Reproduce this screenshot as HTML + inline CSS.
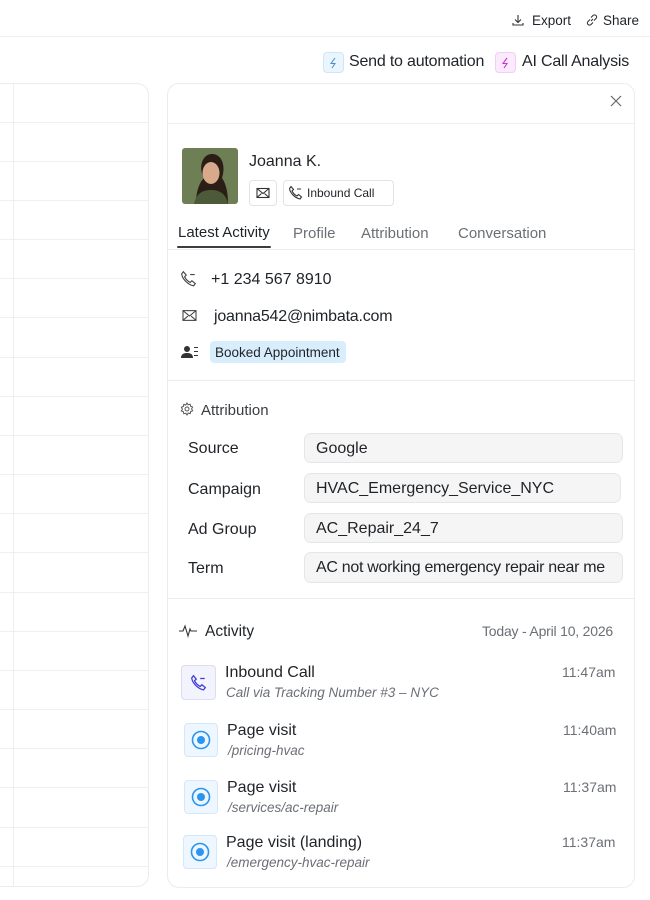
<!DOCTYPE html>
<html><head><meta charset="utf-8"><style>
*{margin:0;padding:0;box-sizing:border-box}
body{width:650px;height:900px;background:#fff;font-family:"Liberation Sans",Arial,sans-serif;color:#1f2328;position:relative;overflow:hidden}
.a{position:absolute;white-space:nowrap}
.d{transform:translateY(2px)}
.hl{position:absolute;left:0;width:149px;height:1px;background:#efefef}
.box{position:absolute;background:#f5f5f5;border:1px solid #e6e6e6;border-radius:7px;font-size:16px;padding-left:11px;line-height:30px}
.lab{position:absolute;left:188px;font-size:16px;transform:translateY(2px)}
.ic{position:absolute;border-radius:4px}
.pv{background:#eef7ff;border:1px solid #d5e8f7}
.t{font-size:16px;transform:translateY(2px)}
.s{font-size:13.5px;font-style:italic;color:#6b6f76;transform:translateY(1px)}
.tm{font-size:14px;color:#6b6f76;transform:translateY(1px)}
</style></head><body>
<div class="a" style="left:0;top:36px;width:650px;height:1px;background:#efefef"></div>
<svg class="a" style="left:511px;top:13px" width="14" height="14" viewBox="0 0 14 14" fill="none" stroke="#333" stroke-width="1.1"><path d="M7 2v7M4 6.5l3 3 3-3M2 10v2h10v-2"/></svg>
<div class="a d" style="left:532px;top:11px;font-size:13.5px">Export</div>
<svg class="a" style="left:585px;top:13px" width="14" height="14" viewBox="0 0 14 14" fill="none" stroke="#333" stroke-width="1.1"><path d="M6 8l2-2M5 6.5L3 8.5a2 2 0 003 3L8 9.5M9 7.5l2-2a2 2 0 00-3-3L6 4.5"/></svg>
<div class="a d" style="left:603px;top:11px;font-size:13.5px">Share</div>
<div class="ic" style="left:323px;top:52px;width:21px;height:21px;background:#eaf6fd;border:1px solid #cfe6f5"></div>
<svg class="a" style="left:328px;top:57px" width="11" height="12" viewBox="0 0 11 12" fill="none" stroke="#4a8cc9" stroke-width="1"><path d="M7 1L3 6.5h4L4 11"/></svg>
<div class="a d" style="left:349px;top:51px;font-size:16px;letter-spacing:-0.2px">Send to automation</div>
<div class="ic" style="left:495px;top:52px;width:21px;height:21px;background:#fbeafd;border:1px solid #f1cff5"></div>
<svg class="a" style="left:500px;top:57px" width="11" height="12" viewBox="0 0 11 12" fill="none" stroke="#c23ac9" stroke-width="1.1"><path d="M7 1L3 6.5h4L4 11"/></svg>
<div class="a d" style="left:522px;top:51px;font-size:16px;letter-spacing:-0.2px">AI Call Analysis</div>

<div class="a" style="left:-10px;top:83px;width:159px;height:804px;border:1px solid #ececec;border-radius:0 12px 12px 0"></div>
<div class="a" style="left:13px;top:83px;width:1px;height:804px;background:#efefef"></div>
<div class="hl" style="top:122px"></div><div class="hl" style="top:161px"></div><div class="hl" style="top:200px"></div><div class="hl" style="top:239px"></div><div class="hl" style="top:278px"></div><div class="hl" style="top:317px"></div><div class="hl" style="top:357px"></div><div class="hl" style="top:396px"></div><div class="hl" style="top:435px"></div><div class="hl" style="top:474px"></div><div class="hl" style="top:513px"></div><div class="hl" style="top:552px"></div><div class="hl" style="top:592px"></div><div class="hl" style="top:631px"></div><div class="hl" style="top:670px"></div><div class="hl" style="top:709px"></div><div class="hl" style="top:748px"></div><div class="hl" style="top:787px"></div><div class="hl" style="top:827px"></div><div class="hl" style="top:866px"></div>

<div class="a" style="left:167px;top:83px;width:468px;height:805px;border:1px solid #ececec;border-radius:12px"></div>
<svg class="a" style="left:610px;top:95px" width="12" height="12" viewBox="0 0 12 12" stroke="#666" stroke-width="1.2"><path d="M1 1l10 10M11 1L1 11"/></svg>
<div class="a" style="left:168px;top:123px;width:466px;height:1px;background:#efefef"></div>
<svg class="a" style="left:182px;top:148px;border-radius:3px" width="56" height="56" viewBox="0 0 56 56"><rect width="56" height="56" fill="#6f7f55"/><path d="M14 56c0-14 4-22 8-26-6-10-2-24 8-24s14 12 10 24c4 6 6 14 6 26z" fill="#2b1e17"/><ellipse cx="29" cy="25" rx="8.5" ry="11" fill="#d9a98b"/><path d="M12 56c2-10 8-14 17-14s15 4 17 14z" fill="#4c5a3a"/></svg>
<div class="a d" style="left:249px;top:151px;font-size:16px">Joanna K.</div>
<div class="a" style="left:249px;top:180px;width:28px;height:26px;border:1px solid #e3e3e3;border-radius:4px"></div>
<svg class="a" style="left:256px;top:187px" width="14" height="12" viewBox="0 0 14 12" fill="none" stroke="#333" stroke-width="1.1"><rect x="1" y="1.5" width="12" height="9"/><path d="M1 1.5l6 5 6-5M1 10.5l4.5-4M13 10.5l-4.5-4"/></svg>
<div class="a" style="left:283px;top:180px;width:111px;height:26px;border:1px solid #e3e3e3;border-radius:4px"></div>
<svg class="a" style="left:288px;top:185px" width="15" height="15" viewBox="0 0 15 15" fill="none" stroke="#333" stroke-width="1.1"><path d="M3 1.5l2.5 3-1.5 1.5c1 2 3 4 5 5l1.5-1.5 3 2.5-1.5 2C7 13 2 8 1.5 3.5zM9 4h4"/></svg>
<div class="a d" style="left:307px;top:184px;font-size:12px">Inbound Call</div>
<div class="a d" style="left:178px;top:222px;font-size:15px">Latest Activity</div>
<div class="a d" style="left:293px;top:223px;font-size:15px;color:#6b6f76">Profile</div>
<div class="a d" style="left:361px;top:223px;font-size:15px;color:#6b6f76">Attribution</div>
<div class="a d" style="left:458px;top:223px;font-size:15px;color:#6b6f76">Conversation</div>
<div class="a" style="left:168px;top:249px;width:466px;height:1px;background:#ececec"></div>
<div class="a" style="left:177px;top:246px;width:94px;height:2px;background:#3a3d42;border-radius:1px"></div>

<svg class="a" style="left:180px;top:270px" width="17" height="17" viewBox="0 0 15 15" fill="none" stroke="#444" stroke-width="1"><path d="M3 1.5l2.5 3-1.5 1.5c1 2 3 4 5 5l1.5-1.5 3 2.5-1.5 2C7 13 2 8 1.5 3.5zM9 4h4"/></svg>
<div class="a t" style="left:211px;top:269px">+1 234 567 8910</div>
<svg class="a" style="left:181px;top:309px" width="17" height="13" viewBox="0 0 14 12" fill="none" stroke="#444" stroke-width="1"><rect x="1" y="1.5" width="12" height="9"/><path d="M1 1.5l6 5 6-5M1 10.5l4.5-4M13 10.5l-4.5-4"/></svg>
<div class="a t" style="left:214px;top:306px;letter-spacing:-0.2px">joanna542@nimbata.com</div>
<svg class="a" style="left:181px;top:345px" width="18" height="14" viewBox="0 0 18 14" fill="#333"><circle cx="6" cy="4" r="3"/><path d="M0 13c0-4 3-5 6-5s6 1 6 5z"/><rect x="13" y="2" width="4" height="1"/><rect x="13" y="6" width="4" height="1"/><rect x="13" y="10" width="4" height="1"/></svg>
<div class="a" style="left:210px;top:341px;width:136px;height:22px;background:#d9eefc;border-radius:4px"></div>
<div class="a d" style="left:215px;top:343px;font-size:13.5px">Booked Appointment</div>
<div class="a" style="left:168px;top:380px;width:466px;height:1px;background:#ececec"></div>

<svg class="a" style="left:180px;top:402px" width="14" height="14" viewBox="0 0 14 14" fill="none" stroke="#555" stroke-width="1"><circle cx="7" cy="7" r="2"/><path d="M7 1l1.2 1.8 2-.6.4 2 2 .8-1 1.9 1 1.9-2 .8-.4 2-2-.6L7 13l-1.2-1.8-2 .6-.4-2-2-.8 1-1.9-1-1.9 2-.8.4-2 2 .6z"/></svg>
<div class="a d" style="left:201px;top:400px;font-size:15px;color:#3a3d42">Attribution</div>
<div class="lab" style="top:438px">Source</div><div class="box" style="left:304px;top:433px;width:319px;height:30px">Google</div>
<div class="lab" style="top:479px">Campaign</div><div class="box" style="left:304px;top:473px;width:317px;height:30px">HVAC_Emergency_Service_NYC</div>
<div class="lab" style="top:519px">Ad Group</div><div class="box" style="left:304px;top:513px;width:319px;height:30px">AC_Repair_24_7</div>
<div class="lab" style="top:558px">Term</div><div class="box" style="left:304px;top:552px;width:319px;height:31px;letter-spacing:-0.3px">AC not working emergency repair near me</div>
<div class="a" style="left:168px;top:598px;width:466px;height:1px;background:#ececec"></div>

<svg class="a" style="left:178px;top:623px" width="20" height="15" viewBox="0 0 20 15" fill="none" stroke="#333" stroke-width="1.1"><path d="M1 8h4l2-5 3 10 2-7 1 2h6"/></svg>
<div class="a d" style="left:205px;top:621px;font-size:15.5px">Activity</div>
<div class="a tm" style="left:482px;top:622px;letter-spacing:-0.2px">Today - April 10, 2026</div>

<div class="ic" style="left:181px;top:665px;width:35px;height:35px;background:#f3f3fd;border:1px solid #dcdcf3"></div>
<svg class="a" style="left:190px;top:674px" width="17" height="17" viewBox="0 0 15 15" fill="none" stroke="#3b3bd6" stroke-width="1.1"><path d="M3 1.5l2.5 3-1.5 1.5c1 2 3 4 5 5l1.5-1.5 3 2.5-1.5 2C7 13 2 8 1.5 3.5zM9 4h4"/></svg>
<div class="a t" style="left:225px;top:662px">Inbound Call</div>
<div class="a s" style="left:226px;top:684px">Call via Tracking Number #3 – NYC</div>
<div class="a tm" style="left:562px;top:663px">11:47am</div>

<div class="ic pv" style="left:184px;top:723px;width:34px;height:34px"></div>
<svg class="a" style="left:191px;top:730px" width="20" height="20"><circle cx="10" cy="10" r="8.5" fill="none" stroke="#2b95f0" stroke-width="1.6"/><circle cx="10" cy="10" r="4" fill="#2b95f0"/></svg>
<div class="a t" style="left:227px;top:720px">Page visit</div>
<div class="a s" style="left:228px;top:742px">/pricing-hvac</div>
<div class="a tm" style="left:563px;top:721px">11:40am</div>

<div class="ic pv" style="left:184px;top:780px;width:34px;height:34px"></div>
<svg class="a" style="left:191px;top:787px" width="20" height="20"><circle cx="10" cy="10" r="8.5" fill="none" stroke="#2b95f0" stroke-width="1.6"/><circle cx="10" cy="10" r="4" fill="#2b95f0"/></svg>
<div class="a t" style="left:227px;top:777px">Page visit</div>
<div class="a s" style="left:228px;top:799px">/services/ac-repair</div>
<div class="a tm" style="left:563px;top:778px">11:37am</div>

<div class="ic pv" style="left:183px;top:835px;width:34px;height:34px"></div>
<svg class="a" style="left:190px;top:842px" width="20" height="20"><circle cx="10" cy="10" r="8.5" fill="none" stroke="#2b95f0" stroke-width="1.6"/><circle cx="10" cy="10" r="4" fill="#2b95f0"/></svg>
<div class="a t" style="left:226px;top:832px">Page visit (landing)</div>
<div class="a s" style="left:227px;top:854px">/emergency-hvac-repair</div>
<div class="a tm" style="left:562px;top:833px">11:37am</div>
</body></html>
